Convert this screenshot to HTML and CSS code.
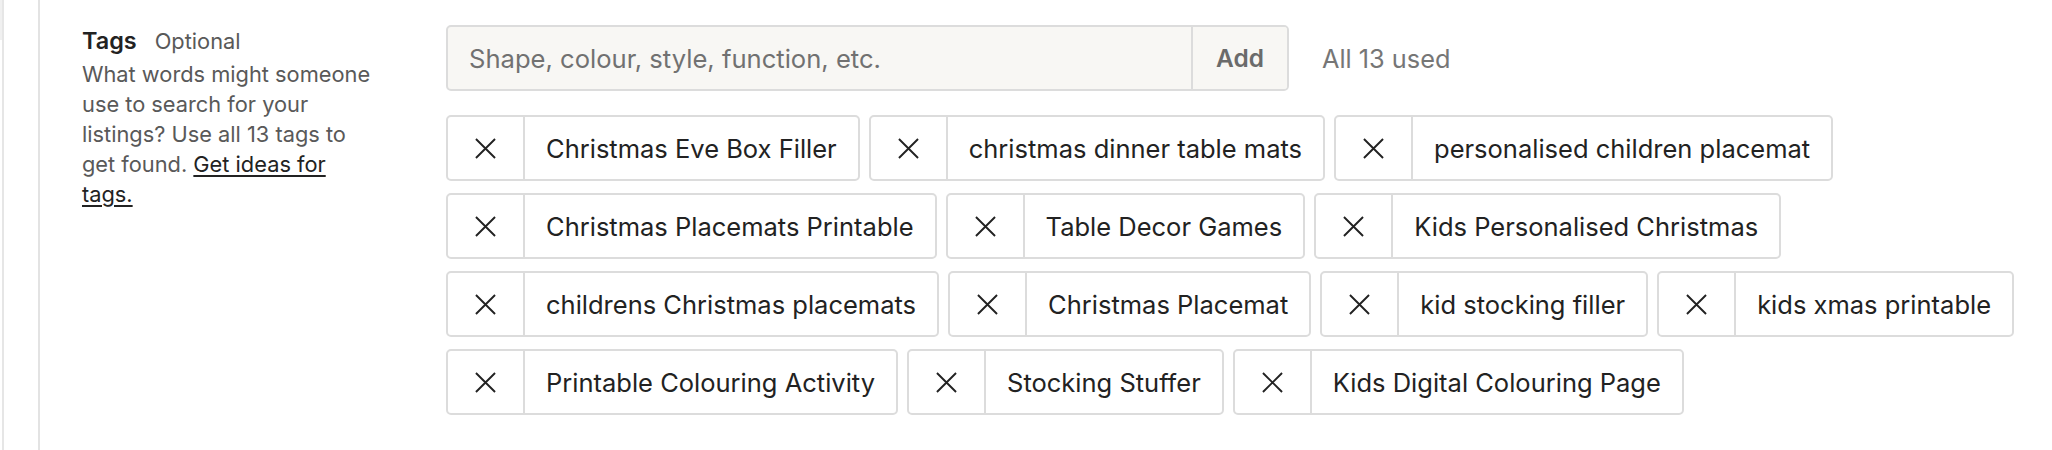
FILE: index.html
```html
<!DOCTYPE html>
<html lang="en">
<head>
<meta charset="utf-8">
<title>Tags</title>
<link rel="stylesheet" href="styles.css">
</head>
<body>
<div class="frame">
  <div class="stub"></div>
  <div class="rail"></div>
  <section class="panel">
    <div class="info">
      <div class="heading"><span class="title">Tags</span><span class="optional">Optional</span></div>
      <p class="desc">What words might someone use to search for your listings? Use all 13 tags to get found. <a href="#" class="link">Get ideas for tags.</a></p>
    </div>
    <div class="field">
      <div class="entry-row">
        <div class="entry">
          <input class="entry-input" type="text" placeholder="Shape, colour, style, function, etc.">
          <button class="entry-add" type="button">Add</button>
        </div>
        <span class="count">All 13 used</span>
      </div>
      <ul class="tags">
        <li class="tag"><button class="tag-x" type="button" aria-label="Remove"><svg viewBox="0 0 22 22"><path d="M1 1L21 21M21 1L1 21"/></svg></button><span class="tag-text">Christmas Eve Box Filler</span></li>
        <li class="tag"><button class="tag-x" type="button" aria-label="Remove"><svg viewBox="0 0 22 22"><path d="M1 1L21 21M21 1L1 21"/></svg></button><span class="tag-text">christmas dinner table mats</span></li>
        <li class="tag"><button class="tag-x" type="button" aria-label="Remove"><svg viewBox="0 0 22 22"><path d="M1 1L21 21M21 1L1 21"/></svg></button><span class="tag-text">personalised children placemat</span></li>
        <li class="tag"><button class="tag-x" type="button" aria-label="Remove"><svg viewBox="0 0 22 22"><path d="M1 1L21 21M21 1L1 21"/></svg></button><span class="tag-text">Christmas Placemats Printable</span></li>
        <li class="tag"><button class="tag-x" type="button" aria-label="Remove"><svg viewBox="0 0 22 22"><path d="M1 1L21 21M21 1L1 21"/></svg></button><span class="tag-text">Table Decor Games</span></li>
        <li class="tag"><button class="tag-x" type="button" aria-label="Remove"><svg viewBox="0 0 22 22"><path d="M1 1L21 21M21 1L1 21"/></svg></button><span class="tag-text">Kids Personalised Christmas</span></li>
        <li class="tag"><button class="tag-x" type="button" aria-label="Remove"><svg viewBox="0 0 22 22"><path d="M1 1L21 21M21 1L1 21"/></svg></button><span class="tag-text">childrens Christmas placemats</span></li>
        <li class="tag"><button class="tag-x" type="button" aria-label="Remove"><svg viewBox="0 0 22 22"><path d="M1 1L21 21M21 1L1 21"/></svg></button><span class="tag-text">Christmas Placemat</span></li>
        <li class="tag"><button class="tag-x" type="button" aria-label="Remove"><svg viewBox="0 0 22 22"><path d="M1 1L21 21M21 1L1 21"/></svg></button><span class="tag-text">kid stocking filler</span></li>
        <li class="tag"><button class="tag-x" type="button" aria-label="Remove"><svg viewBox="0 0 22 22"><path d="M1 1L21 21M21 1L1 21"/></svg></button><span class="tag-text">kids xmas printable</span></li>
        <li class="tag"><button class="tag-x" type="button" aria-label="Remove"><svg viewBox="0 0 22 22"><path d="M1 1L21 21M21 1L1 21"/></svg></button><span class="tag-text">Printable Colouring Activity</span></li>
        <li class="tag"><button class="tag-x" type="button" aria-label="Remove"><svg viewBox="0 0 22 22"><path d="M1 1L21 21M21 1L1 21"/></svg></button><span class="tag-text">Stocking Stuffer</span></li>
        <li class="tag"><button class="tag-x" type="button" aria-label="Remove"><svg viewBox="0 0 22 22"><path d="M1 1L21 21M21 1L1 21"/></svg></button><span class="tag-text">Kids Digital Colouring Page</span></li>
      </ul>
    </div>
  </section>
</div>
</body>
</html>
```
FILE: styles.css
```css
* { box-sizing: border-box; }
html, body { margin: 0; padding: 0; background: #ffffff; }
body {
  font-family: "Inter", "Liberation Sans", sans-serif;
  color: #222222;
}
.frame {
  display: flex;
  min-height: 450px;
}
.stub {
  width: 2px;
  height: 40px;
  background: #f0f0f0;
  flex: none;
}
.rail {
  width: 2px;
  background: #e6e6e6;
  flex: none;
}
.panel {
  flex: 1;
  margin-left: 34px;
  border-left: 2px solid #e3e3e3;
  padding: 25px 8px 0 42px;
  display: grid;
  grid-template-columns: 364px 1fr;
  align-items: start;
}
.info { padding-top: 1px; }
.heading {
  display: flex;
  align-items: baseline;
  line-height: 30px;
}
.title {
  font-size: 23.4px;
  font-weight: 600;
  color: #222222;
}
.optional {
  margin-left: 18px;
  font-size: 21.8px;
  color: #595959;
}
.desc {
  margin: 3px 0 0;
  width: 292px;
  font-size: 21.8px;
  line-height: 30px;
  color: #595959;
}
.link {
  color: #222222;
  text-decoration: underline;
  text-decoration-thickness: 1.5px;
  text-underline-offset: 3px;
}
.field { min-width: 0; }
.entry-row {
  display: flex;
  align-items: center;
  height: 66px;
}
.entry {
  display: flex;
  width: 843px;
  height: 66px;
  border: 2px solid #dcdcdc;
  border-radius: 5px;
  background: #f8f7f4;
  overflow: hidden;
}
.entry-input {
  flex: 1;
  min-width: 0;
  border: 0;
  background: transparent;
  padding: 0 20px 0 21px;
  font-family: inherit;
  font-size: 25.6px;
  color: #222222;
  outline: none;
}
.entry-input::placeholder { color: #717171; opacity: 1; }
.entry-add {
  flex: none;
  width: 96px;
  border: 0;
  border-left: 2px solid #dcdcdc;
  background: #f8f7f4;
  font-family: inherit;
  font-size: 24.4px;
  font-weight: 600;
  color: #6b6b6b;
  padding: 0;
}
.count {
  margin-left: 33px;
  font-size: 25.3px;
  color: #767676;
}
.tags {
  list-style: none;
  margin: 24px 0 0;
  padding: 0;
  display: flex;
  flex-wrap: wrap;
  gap: 12px 9px;
}
.tag {
  display: flex;
  align-items: stretch;
  height: 66px;
  border: 2px solid #dcdcdc;
  border-radius: 5px;
  background: #ffffff;
}
.tag-x {
  width: 77px;
  flex: none;
  display: flex;
  align-items: center;
  justify-content: center;
  border: 0;
  border-right: 2px solid #dcdcdc;
  background: transparent;
  padding: 0;
}
.tag-x svg {
  width: 21px;
  height: 21px;
  fill: none;
  stroke: #222222;
  stroke-width: 2;
}
.tag-text {
  display: flex;
  align-items: center;
  padding: 0 21px 0 21px;
  font-size: 25.5px;
  color: #222222;
  white-space: nowrap;
}
```
